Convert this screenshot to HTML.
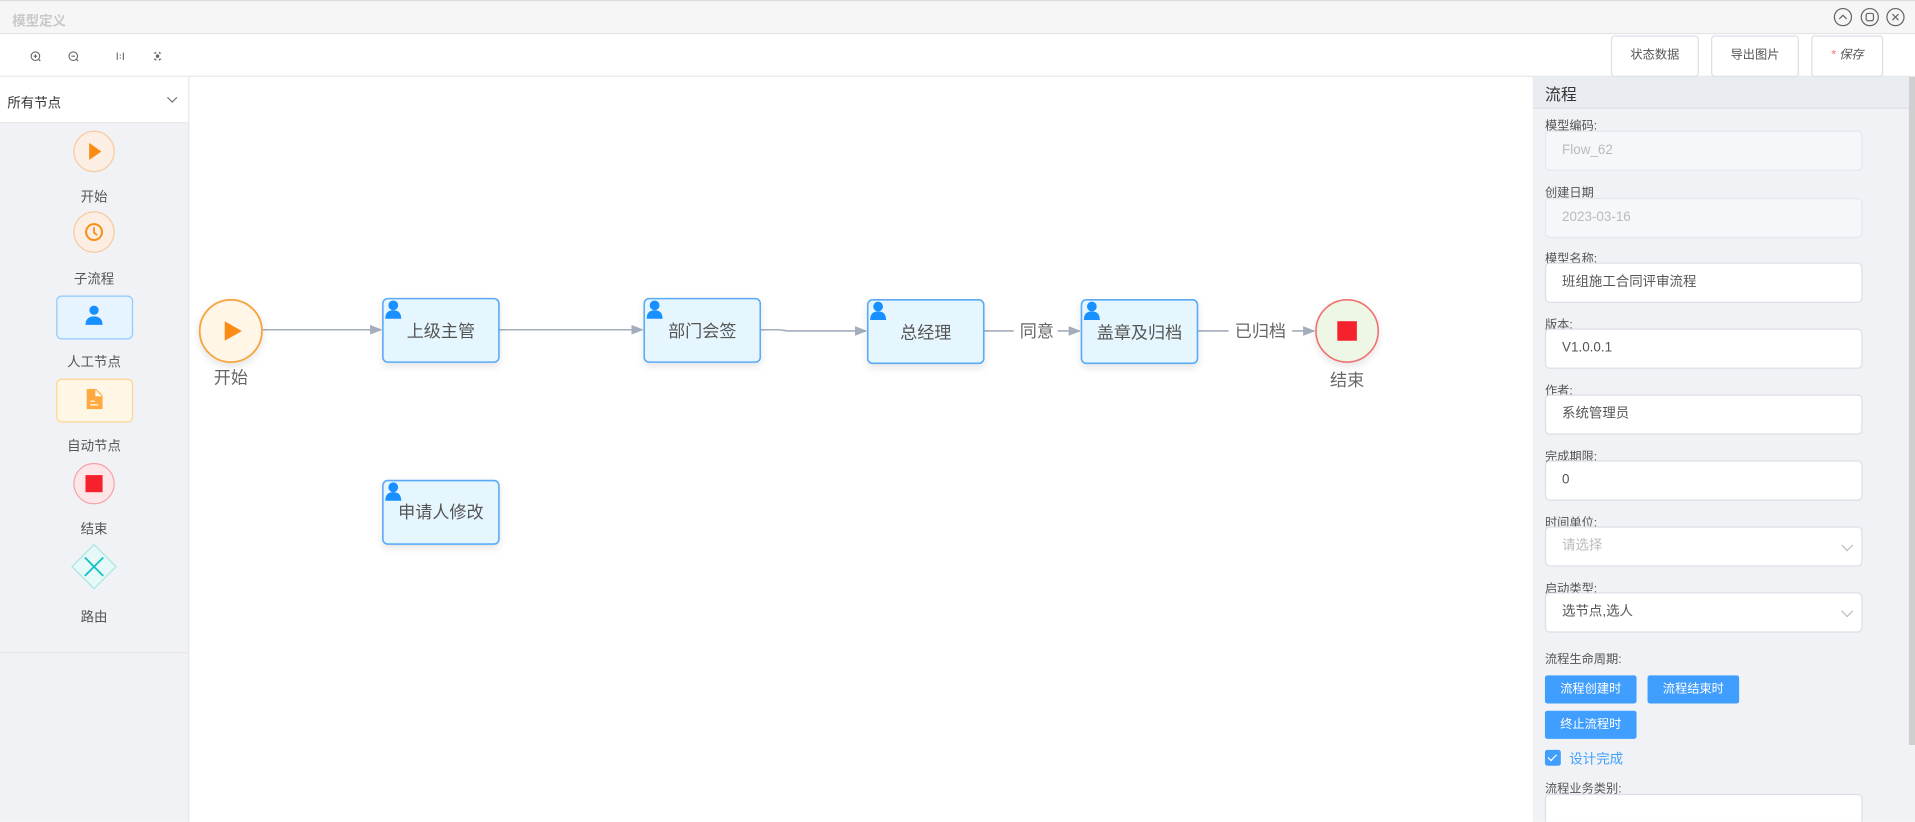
<!DOCTYPE html>
<html><head><meta charset="utf-8"><style>
*{box-sizing:border-box;margin:0;padding:0}
html,body{width:1915px;height:822px;overflow:hidden;background:#fff}
#w{position:absolute;left:0;top:0;width:1568px;height:673px;transform:scale(1.22130);transform-origin:0 0;font-family:"Liberation Sans","Noto Sans CJK SC",sans-serif;color:#333;overflow:hidden}
.a{position:absolute}
.lbl{position:absolute;font-size:11px;color:#555;width:154px;text-align:center;left:0}
.fl{position:absolute;left:1265px;font-size:10px;color:#555}
.in{position:absolute;left:1265px;width:260px;height:33px;background:#fff;border:1px solid #dcdfe6;border-radius:4px;font-size:11px;color:#555;padding-left:13px;line-height:31px}
.dis{background:#f5f7fa;border-color:#e4e7ed;color:#bbb}
.btn{position:absolute;height:34px;border:1px solid #dcdfe6;border-radius:3px;background:#fff;font-size:10px;color:#555;text-align:center;line-height:32px}
.bb{position:absolute;height:23px;width:75px;background:#409eff;border-radius:2px;color:#fff;font-size:10px;text-align:center;line-height:23px}
.chev{position:absolute;right:8px;top:11px;width:7px;height:7px;border-right:1px solid #bbb;border-bottom:1px solid #bbb;transform:rotate(45deg)}
</style></head><body><div id="w">
<div class="a" style="left:0;top:0;width:1568px;height:28px;background:#f6f6f6;border-top:1px solid #ddd;border-bottom:1px solid #e4e4e4"></div>
<div class="a" style="left:10px;top:9px;font-size:11px;font-weight:bold;color:#c8c8c8">模型定义</div>
<svg class="a" style="left:1500px;top:5px" width="66" height="18" viewBox="0 0 66 18" fill="none" stroke="#666" stroke-width="1">
<circle cx="9" cy="9" r="7"/><path d="M6 10.5L9 7.5L12 10.5"/>
<circle cx="31" cy="9" r="7"/><rect x="28" y="6" width="6" height="6" rx="1.5"/>
<circle cx="52" cy="9" r="7"/><path d="M49.5 6.5L54.5 11.5M54.5 6.5L49.5 11.5"/></svg>
<div class="a" style="left:0;top:28px;width:1568px;height:35px;background:#fff;border-bottom:1px solid #e8e8e8"></div>
<svg class="a" style="left:20px;top:38px" width="120" height="16" viewBox="0 0 120 16" fill="none" stroke="#666" stroke-width="0.9">
<circle cx="9" cy="8" r="3.5"/><path d="M11.5 10.5L13 12M7.5 8h3M9 6.5v3"/>
<circle cx="40" cy="8" r="3.5"/><path d="M42.5 10.5L44 12M38.5 8h3"/>
<path d="M76 5v6M81 5v6M78.5 6.5v1M78.5 9v1"/>
<path d="M106 5.5h1.5v-1M112 5.5h-1.5v-1M106 10.5h1.5v1M112 10.5h-1.5v1"/><circle cx="109" cy="8" r="1" fill="#666"/></svg>
<div class="btn" style="left:1319px;top:29px;width:72px">状态数据</div>
<div class="btn" style="left:1401px;top:29px;width:72px">导出图片</div>
<div class="btn" style="left:1483px;top:29px;width:59px;font-style:italic"><span style="color:#f56c6c">* </span>保存</div>
<div class="a" style="left:0;top:63px;width:155px;height:610px;background:#f0f2f5;border-right:1px solid #e8e8e8"></div>
<div class="a" style="left:0;top:534px;width:154px;height:1px;background:#e6e6e6"></div>
<div class="a" style="left:0;top:63px;width:154px;height:38px;background:#fff;border-bottom:1px solid #e6e6e6"></div>
<div class="a" style="left:6px;top:76px;font-size:11px;color:#333">所有节点</div>
<div class="a" style="left:138px;top:77px;width:6px;height:6px;border-right:1px solid #777;border-bottom:1px solid #777;transform:rotate(45deg)"></div>
<svg class="a" style="left:0;top:100px" width="154" height="390" viewBox="0 100 154 390">
<circle cx="77" cy="124" r="16.5" fill="#fdeee3" stroke="#f9c9a1"/><path d="M73 117L83 124L73 131Z" fill="#fa8c16"/>
<circle cx="77" cy="190" r="16.5" fill="#fdeee3" stroke="#f9c9a1"/><circle cx="77" cy="190" r="6.5" fill="none" stroke="#fa8c16" stroke-width="1.6"/><path d="M77 186v4.5l2.5 2" fill="none" stroke="#fa8c16" stroke-width="1.4"/>
<rect x="46.5" y="242.5" width="62" height="35" rx="4" fill="#e6f4ff" stroke="#91caff"/>
<circle cx="77" cy="254" r="3.8" fill="#1890ff"/><path d="M70 266c0-5 3-7 7-7s7 2 7 7z" fill="#1890ff"/>
<rect x="46.5" y="310.5" width="62" height="35" rx="4" fill="#fff7e6" stroke="#ffd591"/>
<path d="M71.5 319H78.5L83.5 324V334.5H71.5Z" fill="#ffa940" stroke="#ffa940" stroke-linejoin="round"/><path d="M78.5 319.5V324H83" fill="#fff7e6" stroke="#fff" stroke-width="0.8"/><path d="M74 328.5h3.5M74 331.5h6.5" stroke="#fff" stroke-width="1"/>
<circle cx="77" cy="396" r="16.5" fill="#fde6e8" stroke="#f5a3aa"/><rect x="70" y="389" width="14" height="14" fill="#f5222d"/>
<path d="M77 446L95 464L77 482L59 464Z" fill="#e6f9f8" stroke="#a8e6e3" stroke-linejoin="round"/><path d="M69.5 456.5l15 15M84.5 456.5l-15 15" stroke="#13c2c2" stroke-width="1.5"/>
</svg>
<div class="lbl" style="top:153px">开始</div>
<div class="lbl" style="top:220px">子流程</div>
<div class="lbl" style="top:288px">人工节点</div>
<div class="lbl" style="top:357px">自动节点</div>
<div class="lbl" style="top:425px">结束</div>
<div class="lbl" style="top:497px">路由</div>
<svg class="a" style="left:155px;top:63px" width="1100" height="610" viewBox="155 63 1100 610" font-family="Liberation Sans,Noto Sans CJK SC,sans-serif">
<defs><filter id="sh" x="-20%" y="-20%" width="140%" height="150%"><feDropShadow dx="0" dy="3" stdDeviation="3" flood-color="#000" flood-opacity="0.1"/></filter>
<marker id="ar" markerWidth="10" markerHeight="8" refX="9" refY="4" orient="auto" markerUnits="userSpaceOnUse"><path d="M0 0L10 4L0 8Z" fill="#a3adbb"/></marker>
<g id="pi"><circle cx="0" cy="-4" r="4" fill="#1890ff"/><path d="M-6.5 7c0-5 2.5-7 6.5-7s6.5 2 6.5 7z" fill="#1890ff"/></g></defs>
<g stroke="#a3adbb" stroke-width="1.3" fill="none">
<path d="M215 270H312" marker-end="url(#ar)"/>
<path d="M408 270H526" marker-end="url(#ar)"/>
<path d="M622 270H638L645 271H709" marker-end="url(#ar)"/>
<path d="M806 271H830M866 271H884" marker-end="url(#ar)"/>
<path d="M981 271H1006M1058 271H1076" marker-end="url(#ar)"/>
</g>
<text x="849" y="276" font-size="14" fill="#666" text-anchor="middle">同意</text>
<text x="1032" y="276" font-size="14" fill="#666" text-anchor="middle">已归档</text>
<circle cx="189" cy="271" r="25.5" fill="#fff6e7" stroke="#f7a540" stroke-width="1.5" filter="url(#sh)"/>
<path d="M184 263L198 271L184 279Z" fill="#fa8c16"/>
<text x="189" y="314" font-size="14" fill="#666" text-anchor="middle">开始</text>
<circle cx="1103" cy="271" r="25.5" fill="#eef6e6" stroke="#f07070" stroke-width="1.3" filter="url(#sh)"/>
<rect x="1095" y="263" width="16" height="16" fill="#f5222d"/>
<text x="1103" y="316" font-size="14" fill="#666" text-anchor="middle">结束</text>
<g font-size="14" fill="#555" text-anchor="middle">
<rect x="313.5" y="244.5" width="95" height="52" rx="4" fill="#e6f6fe" stroke="#5aaaf5" stroke-width="1.3" filter="url(#sh)"/><use href="#pi" x="322" y="254"/><text x="361" y="276">上级主管</text>
<rect x="527.5" y="244.5" width="95" height="52" rx="4" fill="#e6f6fe" stroke="#5aaaf5" stroke-width="1.3" filter="url(#sh)"/><use href="#pi" x="536" y="254"/><text x="575" y="276">部门会签</text>
<rect x="710.5" y="245.5" width="95" height="52" rx="4" fill="#e6f6fe" stroke="#5aaaf5" stroke-width="1.3" filter="url(#sh)"/><use href="#pi" x="719" y="255"/><text x="758" y="277">总经理</text>
<rect x="885.5" y="245.5" width="95" height="52" rx="4" fill="#e6f6fe" stroke="#5aaaf5" stroke-width="1.3" filter="url(#sh)"/><use href="#pi" x="894" y="255"/><text x="933" y="277">盖章及归档</text>
<rect x="313.5" y="393.5" width="95" height="52" rx="4" fill="#e6f6fe" stroke="#5aaaf5" stroke-width="1.3" filter="url(#sh)"/><use href="#pi" x="322" y="403"/><text x="361" y="424">申请人修改</text>
</g></svg>
<div class="a" style="left:1255px;top:63px;width:313px;height:610px;background:#f0f2f5"></div>
<div class="a" style="left:1563px;top:63px;width:5px;height:547px;background:#cfcfcf"></div>
<div class="a" style="left:1255px;top:63px;width:308px;height:26px;background:#e9ecf0;border-bottom:1px solid #dfe2e6"></div>
<div class="a" style="left:1265px;top:67px;font-size:13px;color:#333">流程</div>
<div class="fl" style="top:94px">模型编码:</div><div class="in dis" style="top:107px">Flow_62</div>
<div class="fl" style="top:149px">创建日期</div><div class="in dis" style="top:162px">2023-03-16</div>
<div class="fl" style="top:203px">模型名称:</div><div class="in" style="top:215px">班组施工合同评审流程</div>
<div class="fl" style="top:257px">版本:</div><div class="in" style="top:269px">V1.0.0.1</div>
<div class="fl" style="top:311px">作者:</div><div class="in" style="top:323px">系统管理员</div>
<div class="fl" style="top:365px">完成期限:</div><div class="in" style="top:377px">0</div>
<div class="fl" style="top:419px">时间单位:</div><div class="in" style="top:431px;color:#bbb">请选择<div class="chev"></div></div>
<div class="fl" style="top:473px">启动类型:</div><div class="in" style="top:485px">选节点,选人<div class="chev"></div></div>
<div class="fl" style="top:531px">流程生命周期:</div>
<div class="bb" style="left:1265px;top:553px">流程创建时</div>
<div class="bb" style="left:1349px;top:553px">流程结束时</div>
<div class="bb" style="left:1265px;top:582px">终止流程时</div>
<div class="a" style="left:1265px;top:614px;width:13px;height:13px;background:#409eff;border-radius:2px"></div>
<div class="a" style="left:1269px;top:616px;width:4px;height:7px;border-right:1.3px solid #fff;border-bottom:1.3px solid #fff;transform:rotate(45deg)"></div>
<div class="a" style="left:1285px;top:613px;font-size:11px;color:#409eff">设计完成</div>
<div class="fl" style="top:637px">流程业务类别:</div>
<div class="in" style="top:650px;height:40px"></div>
</div></body></html>
